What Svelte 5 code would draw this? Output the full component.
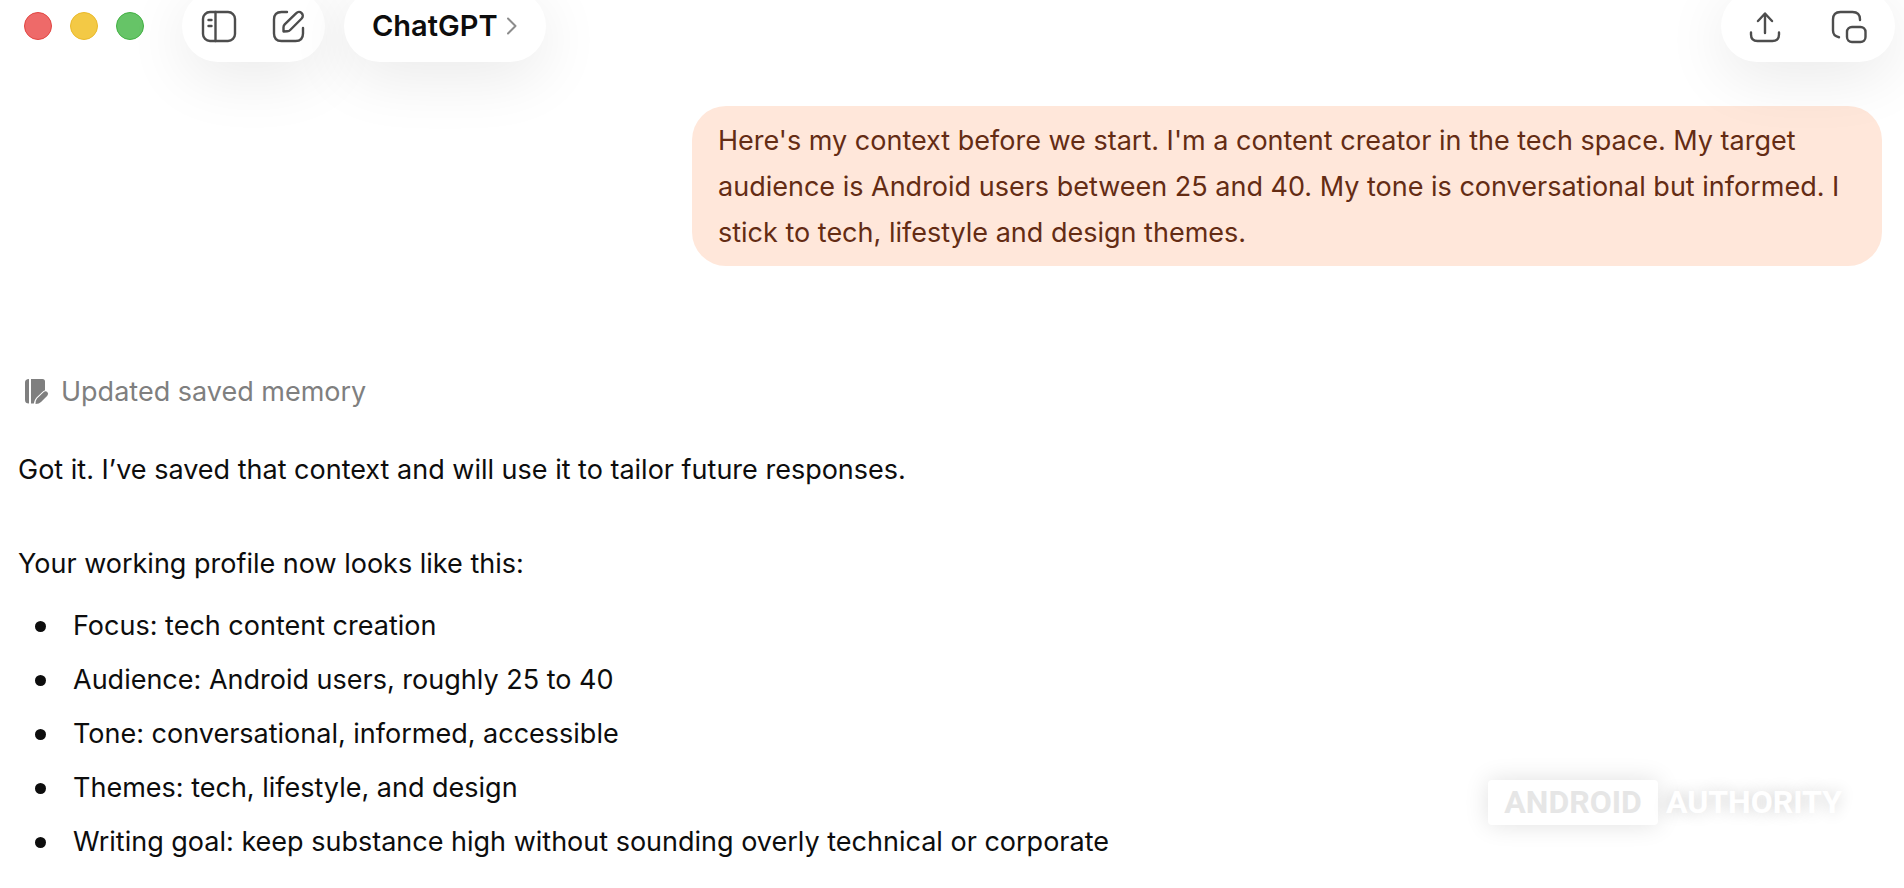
<script>
  const profile = [
    'Focus: tech content creation',
    'Audience: Android users, roughly 25 to 40',
    'Tone: conversational, informed, accessible',
    'Themes: tech, lifestyle, and design',
    'Writing goal: keep substance high without sounding overly technical or corporate',
  ];
</script>

<div class="window">
  <header>
    <div class="lights">
      <button class="light close" aria-label="Close"></button>
      <button class="light minimize" aria-label="Minimize"></button>
      <button class="light zoom" aria-label="Zoom"></button>
    </div>
    <div class="pill tools">
      <button aria-label="Toggle sidebar">
        <svg width="36" height="32" viewBox="0 0 36 32">
          <rect x="2" y="2" width="32" height="29" rx="7" />
          <path d="M14.500 2v29M7.500 10h3M7.500 16h3" />
        </svg>
      </button>
      <button aria-label="New chat">
        <svg width="34" height="32" viewBox="0 0 34 32">
          <path d="M15 2H9.500Q2 2 2 9.500v14Q2 31 9.500 31h14q7.500 0 7.500-7.500v-5.500" />
          <path d="M11.500 21.500v-4.200q0-1.700 1.200-2.900L24.300 3.200a3.700 3.700 0 0 1 5.400 5.300L18.200 20q-1.200 1.200-2.900 1.300z" />
        </svg>
      </button>
    </div>
    <button class="pill model">
      ChatGPT
      <svg width="12" height="18" viewBox="0 0 12 18"><path d="M2 1.500 9.500 9 2 16.500" /></svg>
    </button>
    <div class="pill actions">
      <button aria-label="Share">
        <svg width="32" height="32" viewBox="0 0 32 32">
          <path d="M16 23V4M9 11l7-7.500L23 11M2 22.500v2q0 6.500 6.500 6.500h15q6.500 0 6.500-6.500v-2" />
        </svg>
      </button>
      <button aria-label="Open companion window">
        <svg width="36" height="32" viewBox="0 0 36 32">
          <path d="M29 10V9.500Q29 2 21.500 2h-12Q2 2 2 9.500v11q0 5.500 6 6.700" />
          <rect x="16" y="17" width="18.500" height="15" rx="5" />
        </svg>
      </button>
    </div>
  </header>

  <main>
    <p class="bubble">
      Here's my context before we start. I'm a content creator in the tech space. My target
      audience is Android users between 25 and 40. My tone is conversational but informed. I
      stick to tech, lifestyle and design themes.
    </p>
    <div class="memory">
      <svg width="24" height="28" viewBox="0 0 24 28">
        <path d="M4 1v24.500Q0 25.500 0 22V4.500Q0 1 4 1z" />
        <path d="M6 1h11.500Q20 1 20 3.500v8.800q-1.500.5-2.700 1.700l-5.800 5.500q-1.500 1.500-2 3.500l-.7 2.500H6z" />
        <path d="m12 20.500 6.500-6.200q2-1.700 3.800-.3 1.700 1.700 0 3.700l-6.300 6.200q-1.700 1.700-5.500 2.200.1-4 1.500-5.600z" />
      </svg>
      <span>Updated saved memory</span>
    </div>
    <p class="reply">Got it. I’ve saved that context and will use it to tailor future responses.</p>
    <p class="reply lead">Your working profile now looks like this:</p>
    <ul>
      {#each profile as item}
        <li>{item}</li>
      {/each}
    </ul>
  </main>

  <div class="brand"><span class="boxed">ANDROID</span><span class="open">AUTHORITY</span></div>
</div>

<style>
  :global(body) {
    background: #fff;
  }
  .window {
    position: relative;
    overflow: hidden;
    min-height: 100vh;
    box-sizing: border-box;
    font-family: Inter, 'Noto Sans', sans-serif;
    font-size: 27px;
    line-height: 46px;
    color: #0d0d0d;
  }
  header {
    position: relative;
    z-index: 1;
    display: flex;
    align-items: center;
    height: 72px;
    margin-top: -10px;
    padding: 0 9px 0 24px;
  }
  button {
    border: 0;
    padding: 0;
    background: none;
    color: inherit;
    font: inherit;
    display: flex;
    align-items: center;
  }
  svg {
    display: block;
    overflow: visible;
    fill: none;
    stroke: #4d4d4d;
    stroke-width: 2.4;
    stroke-linecap: round;
    stroke-linejoin: round;
  }
  .lights {
    display: flex;
    gap: 18px;
  }
  .light {
    width: 28px;
    height: 28px;
    border-radius: 50%;
    border: 1px solid;
  }
  .close {
    background: #ee6a69;
    border-color: #e24541;
  }
  .minimize {
    background: #f3c945;
    border-color: #eab92a;
  }
  .zoom {
    background: #66c467;
    border-color: #42b143;
  }
  .pill {
    display: flex;
    align-items: center;
    box-sizing: border-box;
    height: 72px;
    border-radius: 36px;
    background: #fff;
    box-shadow: 0 14px 64px rgba(0, 0, 0, 0.09);
  }
  .tools {
    gap: 35px;
    margin-left: 38px;
    padding: 0 19px;
  }
  .model {
    position: relative;
    gap: 8px;
    margin-left: 19px;
    padding: 0 28px;
    font-size: 29px;
    font-weight: 600;
  }
  .model svg {
    stroke: #8c8c8c;
    stroke-width: 2;
  }
  .actions {
    gap: 50px;
    margin-left: auto;
    padding: 0 28px;
  }
  main {
    display: flex;
    flex-direction: column;
    padding: 44px 22px 0 18px;
  }
  p,
  ul {
    margin: 0;
    padding: 0;
  }
  .bubble {
    align-self: flex-end;
    box-sizing: border-box;
    max-width: 1190px;
    padding: 12px 26px 10px;
    border-radius: 34px;
    background: #ffe7da;
    color: #642c14;
  }
  .memory {
    display: flex;
    align-items: center;
    gap: 12px;
    margin-top: 103px;
    padding-left: 7px;
    color: #7f7f7f;
  }
  .memory svg {
    fill: #7f7f7f;
    stroke: none;
  }
  .reply {
    margin-top: 32px;
  }
  .lead {
    margin-top: 48px;
  }
  ul {
    display: flex;
    flex-direction: column;
    gap: 8px;
    margin-top: 16px;
    list-style: none;
  }
  li {
    display: flex;
    align-items: center;
    gap: 27px;
    padding-left: 17px;
  }
  li::before {
    content: '';
    flex: none;
    width: 11px;
    height: 11px;
    border-radius: 50%;
    background: #0d0d0d;
  }
  .brand {
    position: absolute;
    right: 62px;
    bottom: 63px;
    display: flex;
    align-items: center;
    gap: 8px;
    font-family: Roboto, 'Liberation Sans', sans-serif;
    font-size: 32px;
    line-height: 45px;
    font-weight: 700;
  }
  .boxed {
    padding: 0 16px;
    border-radius: 4px;
    background: #fff;
    color: #e6e6e6;
    box-shadow: 0 0 24px rgba(0, 0, 0, 0.12);
  }
  .open {
    color: #fff;
    text-shadow: 0 0 16px rgba(0, 0, 0, 0.2);
  }
</style>
